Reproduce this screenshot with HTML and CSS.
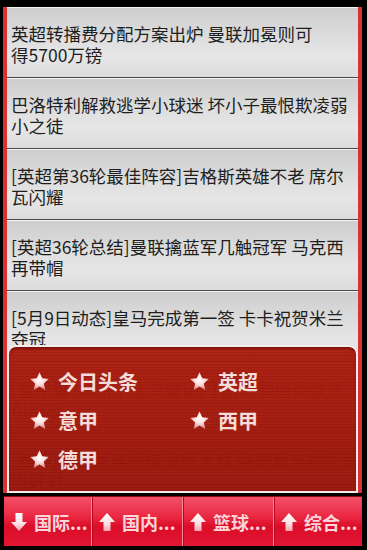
FILE: index.html
```html
<!DOCTYPE html>
<html lang="zh-CN">
<head>
<meta charset="utf-8">
<title>足球新闻</title>
<link rel="stylesheet" href="styles.css">
</head>
<body>
<svg class="defs" width="0" height="0" aria-hidden="true">
  <defs>
    <radialGradient id="starg" cx="50%" cy="40%" r="60%">
      <stop offset="0%" stop-color="#ffffff"/>
      <stop offset="45%" stop-color="#fbe4e2"/>
      <stop offset="100%" stop-color="#d98c88"/>
    </radialGradient>
    <linearGradient id="arrowg" x1="0" y1="0" x2="0" y2="1">
      <stop offset="0%" stop-color="#ffffff"/>
      <stop offset="60%" stop-color="#fbe0e4"/>
      <stop offset="100%" stop-color="#f0a4b0"/>
    </linearGradient>
  </defs>
</svg>
<div class="screen">
  <div class="frame">
    <ul class="news">
      <li class="item">英超转播费分配方案出炉 曼联加冕则可<br>得5700万镑</li>
      <li class="item">巴洛特利解救逃学小球迷 坏小子最恨欺凌弱<br>小之徒</li>
      <li class="item">[英超第36轮最佳阵容]吉格斯英雄不老 席尔<br>瓦闪耀</li>
      <li class="item">[英超36轮总结]曼联擒蓝军几触冠军 马克西<br>再带帽</li>
      <li class="item">[5月9日动态]皇马完成第一签 卡卡祝贺米兰<br>夺冠</li>
      <li class="item item-under">[意甲第36轮]小法二度破门 国米调用调款怒<br>引阿观</li>
      <li class="item item-under">[西甲]穆里尼奥师徒恩怨大戏 阿德直言袖手旁<br>当好对</li>
    </ul>
    <div class="menu">
      <div class="menu-grid">
        <div class="menu-item"><svg class="star" viewBox="0 0 24 24"><polygon points="12,1.5 15.1,8.4 22.6,9.2 17,14.2 18.6,21.6 12,17.8 5.4,21.6 7,14.2 1.4,9.2 8.9,8.4" fill="url(#starg)"/></svg><span>今日头条</span></div>
        <div class="menu-item"><svg class="star" viewBox="0 0 24 24"><polygon points="12,1.5 15.1,8.4 22.6,9.2 17,14.2 18.6,21.6 12,17.8 5.4,21.6 7,14.2 1.4,9.2 8.9,8.4" fill="url(#starg)"/></svg><span>英超</span></div>
        <div class="menu-item"><svg class="star" viewBox="0 0 24 24"><polygon points="12,1.5 15.1,8.4 22.6,9.2 17,14.2 18.6,21.6 12,17.8 5.4,21.6 7,14.2 1.4,9.2 8.9,8.4" fill="url(#starg)"/></svg><span>意甲</span></div>
        <div class="menu-item"><svg class="star" viewBox="0 0 24 24"><polygon points="12,1.5 15.1,8.4 22.6,9.2 17,14.2 18.6,21.6 12,17.8 5.4,21.6 7,14.2 1.4,9.2 8.9,8.4" fill="url(#starg)"/></svg><span>西甲</span></div>
        <div class="menu-item"><svg class="star" viewBox="0 0 24 24"><polygon points="12,1.5 15.1,8.4 22.6,9.2 17,14.2 18.6,21.6 12,17.8 5.4,21.6 7,14.2 1.4,9.2 8.9,8.4" fill="url(#starg)"/></svg><span>德甲</span></div>
      </div>
    </div>
  </div>
  <nav class="tabs">
    <div class="tab"><svg class="arrow" viewBox="0 0 18 20"><polygon points="5.5,1 12.5,1 12.5,10 17,10 9,19 1,10 5.5,10" fill="url(#arrowg)"/></svg><span>国际...</span></div>
    <div class="tab"><svg class="arrow" viewBox="0 0 18 20"><polygon points="9,1 17,10 12.5,10 12.5,19 5.5,19 5.5,10 1,10" fill="url(#arrowg)"/></svg><span>国内...</span></div>
    <div class="tab"><svg class="arrow" viewBox="0 0 18 20"><polygon points="9,1 17,10 12.5,10 12.5,19 5.5,19 5.5,10 1,10" fill="url(#arrowg)"/></svg><span>篮球...</span></div>
    <div class="tab"><svg class="arrow" viewBox="0 0 18 20"><polygon points="9,1 17,10 12.5,10 12.5,19 5.5,19 5.5,10 1,10" fill="url(#arrowg)"/></svg><span>综合...</span></div>
  </nav>
</div>
</body>
</html>
```
FILE: styles.css
```css
html, body {
  margin: 0;
  padding: 0;
}
body {
  background: #000;
  width: 367px;
  height: 550px;
  overflow: hidden;
  font-family: "Noto Sans CJK SC", "Noto Sans", sans-serif;
}
.defs {
  position: absolute;
  width: 0;
  height: 0;
}
.screen {
  padding-top: 7px;
}
.frame {
  position: relative;
  margin-left: 3px;
  width: 351px;
  height: 486px;
  border-left: 4px solid #d83232;
  border-right: 4px solid #d83232;
  overflow: hidden;
  background: #d8d8d8;
}
.news {
  list-style: none;
  margin: 0;
  padding: 0;
}
.item {
  padding: 16px 4px 12px 4px;
  font-size: 17.5px;
  line-height: 21px;
  color: #1e1e1e;
  white-space: nowrap;
  background: linear-gradient(to bottom, #cdcdcd 0%, #dedede 45%, #e6e6e6 70%, #dcdcdc 100%);
  border-bottom: 1px solid #474747;
  box-shadow: inset 0 1px 0 #f4f4f4;
}
.item-under {
  color: #555;
}
.menu {
  position: absolute;
  left: 0;
  right: 0;
  top: 338px;
  bottom: 0;
  box-sizing: border-box;
  border: 2px solid #f3ecec;
  border-radius: 9px 9px 0 0;
  padding: 15px 20px 12px;
  background:
    linear-gradient(to bottom, rgba(190, 40, 20, 0.2), rgba(120, 10, 5, 0.25)),
    repeating-linear-gradient(to bottom, rgba(168, 26, 12, 0.96) 0 2px, rgba(150, 20, 10, 0.96) 2px 3px);
  box-shadow: inset 0 2px 2px rgba(80, 0, 0, 0.5);
}
.menu-grid {
  display: grid;
  grid-template-columns: 160px 160px;
  grid-auto-rows: 39px;
}
.menu-item {
  display: flex;
  align-items: center;
  gap: 8px;
  color: #f6dcd8;
  font-size: 20px;
  font-weight: bold;
}
.star {
  width: 21px;
  height: 21px;
  flex: none;
}
.tabs {
  display: grid;
  grid-template-columns: 87px 91px 91px 89px;
  margin: 3px 0 0 4px;
  width: 358px;
  height: 50px;
  box-sizing: border-box;
  border-top: 1px solid #8a0a14;
  background: linear-gradient(to bottom, #f2506a 0%, #ea2842 40%, #dc0e2a 60%, #e01632 100%);
}
.tab {
  display: flex;
  align-items: center;
  gap: 6px;
  padding-left: 6px;
  color: #fbd4da;
  font-size: 18px;
  font-weight: bold;
  border-left: 1px solid #f58a98;
  box-shadow: inset 1px 0 0 #b8081e;
}
.tab:first-child {
  border-left: none;
  box-shadow: none;
}
.arrow {
  width: 18px;
  height: 20px;
  flex: none;
}
```
